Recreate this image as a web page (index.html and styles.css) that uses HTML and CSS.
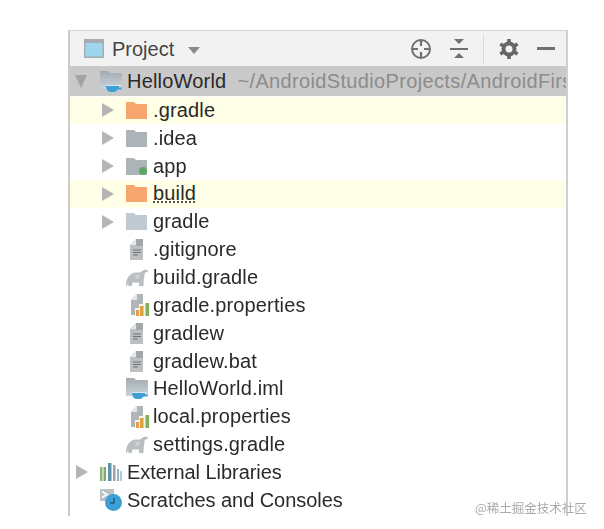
FILE: index.html
```html
<!DOCTYPE html>
<html lang="en">
<head>
    <meta charset="utf-8" />
    <title>Project</title>
    <link rel="stylesheet" href="styles.css">
</head>
<body>

<svg class="defs" width="0" height="0">
    <defs>
        <linearGradient id="moduleFill" x1="0" y1="0" x2="0" y2="1">
            <stop offset="0" stop-color="#a4abb0"/>
            <stop offset="1" stop-color="#c9d5dc"/>
        </linearGradient>
    </defs>
    <symbol id="folder" viewBox="0 0 21 17">
        <path d="M0 0h8l2 2h11v15H0z" fill="currentColor"/>
    </symbol>
    <symbol id="file" viewBox="0 0 14 21">
        <path d="M0 6l6-6h7v21H0z" fill="#bcc0c2"/>
        <path d="M6 0h7v7H6z" fill="#a2a7aa"/>
        <path d="M0 6h6V0z" fill="#e3e5e6"/>
        <path d="M3 11h8M3 13.500h8M3 16h5" stroke="#6f7578" stroke-width="1.200"/>
    </symbol>
    <symbol id="props" viewBox="0 0 20 22">
        <path d="M1 6l6-6h6v21H1z" fill="#b0b5b8"/>
        <path d="M1 6h6V0z" fill="#e3e5e6"/>
        <path d="M5 14h15v8H5zM9 10h11v5H9z" fill="#f4f4f4"/>
        <path d="M6 16h3v6H6z" fill="#e89a4a"/>
        <path d="M10 12h3.500v10H10z" fill="#e0a040"/>
        <path d="M15.500 9H19v13h-3.500z" fill="#7fb35a"/>
    </symbol>
    <symbol id="elephant" viewBox="0 0 22 17">
        <path d="M0 17C0 9 4 3.500 10 3.500h4c1.500-.5 3-3 5.500-3 1.500 0 2.500 1 2.500 2.500l-2 .3c-1 0-1.500 1-1.500 3-.5 3-1 6-1 11.200h-4.500v-4H6.500l-1 4H2.500L2 14l-1 3z" fill="#b9bec1"/>
        <path d="M9 6c2-1 4-1 5 0 0 2-1 4-3 4-1 0-2-2-2-4z" fill="#cdd1d3"/>
    </symbol>
    <symbol id="module" viewBox="0 0 22 21">
        <path d="M0 0h8l2 2h12v16H0z" fill="url(#moduleFill)"/>
        <path d="M6 14h15v1.500H6z" fill="#dfe8ed"/>
        <path d="M6 15h13c0 .5 0 1-.3 1.500h3v2h-4C16.500 20 15.500 21 14 21h-3.500C8 21 6 18 6 15z" fill="#3e9fd6"/>
    </symbol>
</svg>

<div class="panel">
    <div class="toolbar">
        <svg class="window-icon" width="20" height="19" viewBox="0 0 20 19">
            <rect width="20" height="19" fill="#a6acb0"/>
            <rect x="1.500" y="4" width="17" height="13.500" fill="#9ed6ee"/>
        </svg>
        <span class="toolbar-title">Project</span>
        <span class="dropdown"></span>
        <div class="toolbar-actions">
            <svg width="22" height="22" viewBox="0 0 22 22" fill="none" stroke="#707070">
                <circle cx="11" cy="11" r="9" stroke-width="2"/>
                <path d="M11 2v6M11 14v6M2 11h6M14 11h6" stroke-width="2.200"/>
            </svg>
            <svg class="collapse" width="18" height="20" viewBox="0 0 18 20" fill="#707070">
                <path d="M4 0h10l-5 5zM4 19h10l-5-5z"/>
                <path d="M0 9h18v2H0z"/>
            </svg>
            <span class="divider"></span>
            <svg class="gear" width="20" height="20" viewBox="0 0 20 20">
                <circle cx="10" cy="10" r="5.500" fill="none" stroke="#666" stroke-width="4"/>
                <path d="M10 0v20M1.300 5l17.400 10M1.300 15L18.700 5" stroke="#666" stroke-width="3.600" stroke-dasharray="3.400 13.200"/>
            </svg>
            <span class="minimize"></span>
        </div>
    </div>

    <div class="root-row">
        <span class="arrow arrow-down"></span>
        <svg class="root-icon" width="22" height="21"><use href="#module"/></svg>
        <span class="name">HelloWorld</span>
        <span class="path">~/AndroidStudioProjects/AndroidFirst</span>
    </div>

    <ul class="tree">
        <li class="row ignored">
            <span class="arrow"></span>
            <svg class="icon icon-orange" width="21" height="17"><use href="#folder"/></svg>
            <span>.gradle</span>
        </li>
        <li class="row">
            <span class="arrow"></span>
            <svg class="icon icon-grey" width="21" height="17"><use href="#folder"/></svg>
            <span>.idea</span>
        </li>
        <li class="row">
            <span class="arrow"></span>
            <svg class="icon icon-grey" width="21" height="17"><use href="#folder"/></svg>
            <span class="dot"></span>
            <span>app</span>
        </li>
        <li class="row ignored">
            <span class="arrow"></span>
            <svg class="icon icon-orange" width="21" height="17"><use href="#folder"/></svg>
            <span class="underlined">build</span>
        </li>
        <li class="row">
            <span class="arrow"></span>
            <svg class="icon icon-pale" width="21" height="17"><use href="#folder"/></svg>
            <span>gradle</span>
        </li>
        <li class="row">
            <svg class="icon file-icon" width="14" height="21"><use href="#file"/></svg>
            <span>.gitignore</span>
        </li>
        <li class="row">
            <svg class="icon" width="22" height="17"><use href="#elephant"/></svg>
            <span>build.gradle</span>
        </li>
        <li class="row">
            <svg class="icon props-icon" width="20" height="22"><use href="#props"/></svg>
            <span>gradle.properties</span>
        </li>
        <li class="row">
            <svg class="icon file-icon" width="14" height="21"><use href="#file"/></svg>
            <span>gradlew</span>
        </li>
        <li class="row">
            <svg class="icon file-icon" width="14" height="21"><use href="#file"/></svg>
            <span>gradlew.bat</span>
        </li>
        <li class="row">
            <svg class="icon" width="22" height="21"><use href="#module"/></svg>
            <span>HelloWorld.iml</span>
        </li>
        <li class="row">
            <svg class="icon props-icon" width="20" height="22"><use href="#props"/></svg>
            <span>local.properties</span>
        </li>
        <li class="row">
            <svg class="icon" width="22" height="17"><use href="#elephant"/></svg>
            <span>settings.gradle</span>
        </li>
        <li class="row top-level">
            <span class="arrow"></span>
            <svg class="icon" width="22" height="18" viewBox="0 0 22 18">
                <path d="M0 4h2.500v14H0z" fill="#8fb56e"/>
                <path d="M3.500 4H6v14H3.500z" fill="#7fa87a"/>
                <path d="M8 0h3.500v18H8z" fill="#5f93a8"/>
                <path d="M13 2h2.500v16H13z" fill="#9aa4aa"/>
                <path d="M17 6h2v12h-2z" fill="#8fb4cc"/>
                <path d="M20 8h2v10h-2z" fill="#b6c9d6"/>
            </svg>
            <span>External Libraries</span>
        </li>
        <li class="row top-level">
            <svg class="icon" width="22" height="22" viewBox="0 0 22 22">
                <path d="M0 0h14v12H0z" fill="#bcc1c4"/>
                <path d="M2 2.500l5 3-5 3" fill="none" stroke="#fff" stroke-width="1.500"/>
                <circle cx="13.500" cy="13.500" r="8.500" fill="#3e9fd6"/>
                <path d="M14 9v5h-4" fill="none" stroke="#1f5f85" stroke-width="1.500"/>
            </svg>
            <span>Scratches and Consoles</span>
        </li>
    </ul>
</div>

<div class="watermark">@稀土掘金技术社区</div>

</body>
</html>
```

FILE: styles.css
```css
* {
    margin: 0;
    padding: 0;
    box-sizing: border-box;
}

body {
    font-family: "Liberation Sans", Arial, sans-serif;
    background-color: #fff;
    color: #2a2a2a;
    height: 529px;
    overflow: hidden;
    position: relative;
}

svg {
    flex-shrink: 0;
}

.defs {
    position: absolute;
}

.panel {
    width: 500px;
    height: 486px;
    margin: 30px 0 0 68px;
    border-top: 1px solid #d4d4d4;
    border-left: 2px solid #cbcbcb;
    border-right: 2px solid #cfcfcf;
    overflow: hidden;
    filter: blur(0.4px);
}

.toolbar {
    display: flex;
    align-items: center;
    height: 35px;
    padding-left: 14px;
    background-color: #f2f2f2;
    font-size: 20px;
    color: #444;
}

.toolbar-title {
    margin-top: 2px;
}

.window-icon {
    margin-right: 8px;
}

.dropdown {
    width: 0;
    height: 0;
    margin: 3px 0 0 14px;
    border-left: 6.5px solid transparent;
    border-right: 6.5px solid transparent;
    border-top: 7px solid #8a8a8a;
}

.toolbar-actions {
    display: flex;
    align-items: center;
    margin-left: auto;
    padding-right: 11px;
}

.collapse {
    margin-left: 18px;
}

.divider {
    width: 1px;
    height: 30px;
    margin: 0 15px;
    background-color: #dcdcdc;
}

.minimize {
    width: 18px;
    height: 3px;
    margin-left: 18px;
    background-color: #707070;
}

.root-row {
    display: flex;
    align-items: center;
    height: 30px;
    padding-left: 5px;
    background-color: #c9c9c9;
    font-size: 20px;
    white-space: nowrap;
}

.root-icon {
    margin-left: 13px;
    margin-right: 5px;
}

.root-row .name {
    letter-spacing: 0.2px;
}

.root-row .path {
    margin-left: 11px;
    color: #8c8c8c;
    letter-spacing: 0.35px;
}

.arrow {
    width: 0;
    height: 0;
    border-top: 7px solid transparent;
    border-bottom: 7px solid transparent;
    border-left: 12px solid #b5b5b5;
}

.arrow-down {
    border-left: 6px solid transparent;
    border-right: 6px solid transparent;
    border-top: 13px solid #a3a3a3;
    border-bottom: 0;
}

.tree {
    list-style: none;
    padding-top: 0.5px;
}

.row {
    display: flex;
    align-items: center;
    position: relative;
    height: 27.85px;
    padding-left: 56px;
    font-size: 20px;
    letter-spacing: 0.15px;
    white-space: nowrap;
}

.row .arrow {
    position: absolute;
    left: 32px;
}

.row .icon {
    position: absolute;
    left: 56px;
}

.row > span:last-child {
    margin-left: 27px;
}

.row .file-icon {
    left: 60px;
}

.row .props-icon {
    left: 60px;
}

.ignored {
    background-color: #fffee6;
}

.icon-orange {
    color: #f8a66f;
}

.icon-grey {
    color: #adb4b8;
}

.icon-pale {
    color: #bfcad2;
}

.dot {
    position: absolute;
    left: 69px;
    top: 15px;
    width: 8px;
    height: 8px;
    border-radius: 50%;
    background-color: #5fa85f;
}

.underlined {
    text-decoration: underline dotted #555;
}

.top-level {
    padding-left: 30px;
    letter-spacing: -0.05px;
}

.top-level .arrow {
    left: 6px;
}

.top-level .icon {
    left: 30px;
}

.watermark {
    position: absolute;
    left: 475px;
    top: 498px;
    font-family: "Noto Sans CJK SC", "Liberation Sans", sans-serif;
    font-size: 12.5px;
    color: #aaa;
    white-space: nowrap;
}
```
